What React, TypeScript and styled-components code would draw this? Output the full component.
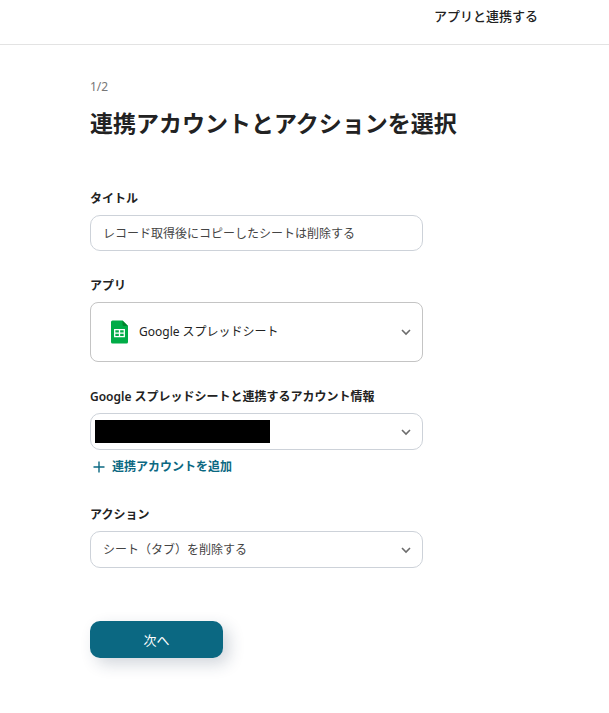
import React from "react";
import styled, { createGlobalStyle } from "styled-components";

const GlobalStyle = createGlobalStyle`
  * { box-sizing: border-box; }
  body {
    margin: 0;
    background: #fff;
    color: #222;
    font-family: "Noto Sans", "Noto Sans CJK JP", sans-serif;
    font-size: 12px;
    line-height: 20px;
  }
  button, input, select { font: inherit; color: inherit; margin: 0; }
`;

const Header = styled.header`
  display: flex;
  justify-content: flex-end;
  height: 45px;
  padding: 6px 71px 0 0;
  border-bottom: 1px solid #e3e3e3;
  font-size: 13px;
  font-weight: 500;
`;

const Main = styled.main`
  padding: 32px 90px 48px;
`;

const Step = styled.p`
  margin: 0;
  color: #777;
`;

const Title = styled.h1`
  margin: 9px 0 48px;
  font-size: 23px;
  line-height: 35px;
  font-weight: 700;
  white-space: nowrap;
`;

const Form = styled.form`
  display: flex;
  flex-direction: column;
  gap: 25px;
  max-width: 333px;
`;

const Field = styled.div`
  display: flex;
  flex-direction: column;
  gap: 6px;
`;

const Label = styled.label`
  font-weight: 600;
`;

const TextInput = styled.input`
  width: 100%;
  height: 36px;
  padding: 0 12px;
  border: 1px solid #cdd2d9;
  border-radius: 10px;
  background: #fff;
  color: #444;
`;

const SelectBox = styled.div`
  display: grid;
  grid-template-columns: 100%;
  align-items: center;
  & > * { grid-area: 1 / 1; }
`;

const Select = styled.select<{ $large?: boolean }>`
  appearance: none;
  width: 100%;
  height: ${(p) => (p.$large ? 60 : 37)}px;
  padding: 0 36px 0 ${(p) => (p.$large ? 48 : 12)}px;
  border: 1px solid ${(p) => (p.$large ? "#c4c4c4" : "#cdd2d9")};
  border-radius: ${(p) => (p.$large ? 8 : 10)}px;
  background: #fff;
  color: ${(p) => (p.$large ? "#222" : "#444")};
`;

const Chevron = styled.svg`
  justify-self: end;
  margin-right: 11px;
  pointer-events: none;
`;

const SheetIcon = styled.svg`
  margin-left: 21px;
  pointer-events: none;
`;

const Redaction = styled.span`
  width: 175px;
  height: 23px;
  margin-left: 5px;
  background: #000;
  pointer-events: none;
`;

const AddButton = styled.button`
  display: flex;
  align-items: center;
  align-self: flex-start;
  gap: 7px;
  padding: 0 0 2px 3px;
  border: 0;
  background: none;
  color: #0b6882;
  font-weight: 600;
  line-height: 22px;
`;

const NextButton = styled.button`
  align-self: flex-start;
  width: 133px;
  height: 37px;
  margin-top: 28px;
  padding: 0;
  border: 0;
  border-radius: 10px;
  background: #0b6882;
  color: #fff;
  font-size: 13px;
  font-weight: 400;
  box-shadow: 6px 6px 16px rgba(30, 50, 80, 0.2);
`;

function ChevronDown() {
  return (
    <Chevron width="12" height="12" viewBox="0 0 12 12" fill="none" aria-hidden="true">
      <path d="M2 4 6 8l4-4" stroke="#6c6c6c" strokeWidth="1.6" />
    </Chevron>
  );
}

function SpreadsheetLogo() {
  return (
    <SheetIcon width="17" height="24" viewBox="0 0 17 24" aria-hidden="true">
      <path d="M1.5 0.5H11.5L17 6V22a1.5 1.5 0 0 1-1.5 1.5h-14A1.5 1.5 0 0 1 0 22V2A1.5 1.5 0 0 1 1.5 0.5Z" fill="#00ac47" />
      <path d="M11.5 0.5 17 6H13a1.5 1.5 0 0 1-1.5-1.5Z" fill="#00832d" />
      <path d="M3.7 9.7h9.6v7H3.7Z M3.7 13.2h9.6 M8.5 9.7v7" fill="none" stroke="#fff" strokeWidth="1.3" />
    </SheetIcon>
  );
}

export default function App() {
  return (
    <>
      <GlobalStyle />
      <Header>アプリと連携する</Header>
      <Main>
        <Step>1/2</Step>
        <Title>連携アカウントとアクションを選択</Title>
        <Form onSubmit={(e) => e.preventDefault()}>
          <Field>
            <Label htmlFor="title">タイトル</Label>
            <TextInput id="title" defaultValue="レコード取得後にコピーしたシートは削除する" />
          </Field>
          <Field>
            <Label htmlFor="app">アプリ</Label>
            <SelectBox>
              <Select id="app" $large>
                <option>Google スプレッドシート</option>
              </Select>
              <SpreadsheetLogo />
              <ChevronDown />
            </SelectBox>
          </Field>
          <Field>
            <Label htmlFor="account">Google スプレッドシートと連携するアカウント情報</Label>
            <SelectBox>
              <Select id="account">
                <option />
              </Select>
              <Redaction />
              <ChevronDown />
            </SelectBox>
            <AddButton type="button">
              <svg width="12" height="12" viewBox="0 0 12 12" aria-hidden="true">
                <path d="M6 0.5v11M0.5 6h11" stroke="#0b6882" strokeWidth="1.4" />
              </svg>
              連携アカウントを追加
            </AddButton>
          </Field>
          <Field>
            <Label htmlFor="action">アクション</Label>
            <SelectBox>
              <Select id="action">
                <option>シート（タブ）を削除する</option>
              </Select>
              <ChevronDown />
            </SelectBox>
          </Field>
          <NextButton type="submit">次へ</NextButton>
        </Form>
      </Main>
    </>
  );
}
